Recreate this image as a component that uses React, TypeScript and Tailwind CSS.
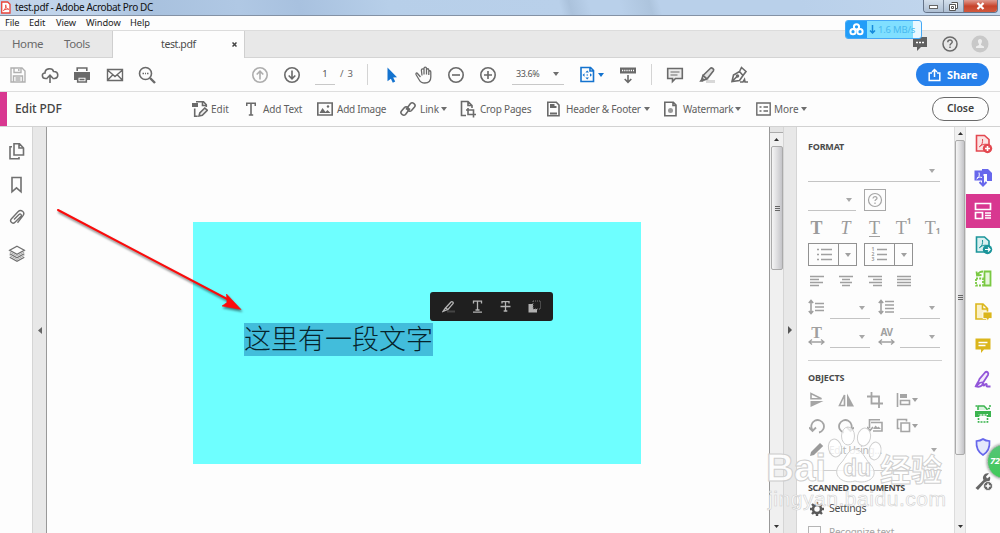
import type { ReactNode } from 'react'

type IconProps = { w?: number; h?: number; children: ReactNode; className?: string; sw?: number }

function Icon({ w = 18, h = 18, children, className = 'text-[#6a6a6a]', sw = 1.6 }: IconProps) {
  return (
    <svg width={w} height={h} viewBox={`0 0 ${w} ${h}`} fill="none" stroke="currentColor" strokeWidth={sw} className={`shrink-0 ${className}`}>
      {children}
    </svg>
  )
}

function Caret({ className = 'text-[#6e6e6e]' }: { className?: string }) {
  return (
    <svg width="6" height="4" viewBox="0 0 6 4" fill="currentColor" className={`shrink-0 ${className}`}>
      <path d="M0 0h6L3 4z" />
    </svg>
  )
}

function Cell({ children }: { children: ReactNode }) {
  return <div className="flex w-8 shrink-0 items-center justify-center">{children}</div>
}

function TitleBar() {
  return (
    <div className="flex h-4 items-start overflow-hidden border-b border-[#8492a5] bg-[linear-gradient(75deg,#c3d5ea_0%,#bfd3eb_9%,#a8c1de_15%,#b0c8e4_24%,#a8c1df_30%,#b7cfe9_39%,#b9d0ea_56%,#abc2dc_57%,#b9d0ea_59%,#b9d0ea_62%,#adc4dd_65%,#b9d0ea_66%,#b9d0ea_80%,#c4d8ee_100%)]">
      <Icon w={11} h={13} className="mt-[1px] text-[#e8443a]" sw={1.3}>
        <path d="M1.7 1h6l2.300 2.300V12H1.700z" fill="#fff" />
        <path d="M3.300 9.500c2-1 3-4 2.500-5.700-.7.5.4 4.500 3 4.500-1.500-.6-4 .2-5.500 1.200" strokeWidth=".9" />
      </Icon>
      <span className="ml-[4px] whitespace-nowrap text-[10px] leading-[15px] tracking-[-0.35px] text-[#111]">test.pdf - Adobe Acrobat Pro DC</span>
      <div className="ml-auto mr-[2px] flex h-[13px] overflow-hidden rounded-b border border-t-0 border-[#65748a]">
        <div className="flex w-5 items-center justify-center border-r border-[#7c899b] bg-linear-to-b from-[#d3dfec] to-[#aebfd3]">
          <div className="mt-[2px] h-1 w-[9px] border border-[#666] bg-white" />
        </div>
        <div className="flex w-5 items-center justify-center border-r border-[#7c899b] bg-linear-to-b from-[#d3dfec] to-[#aebfd3]">
          <Icon w={9} h={9} sw={1} className="text-[#555]">
            <path d="M2.500.500h6v6h-2M.500 2.500h6v6h-6z" fill="#fff" />
            <path d="M2.500 4.500h2v2h-2z" />
          </Icon>
        </div>
        <div className="flex w-[33px] items-center justify-center bg-linear-to-b from-[#df9a90] via-[#c7432b] to-[#d1593e]">
          <Icon w={9} h={8} sw={2.200} className="text-white">
            <path d="m1.500 1 6 6m0-6-6 6" />
          </Icon>
        </div>
      </div>
    </div>
  )
}

function MenuBar() {
  return (
    <div className="flex h-[15px] items-center border-b border-[#dcdcdc] bg-[#fdfdfd] pb-[1px] text-[9.300px] leading-none tracking-[-0.1px] text-[#1c1c1c]">
      <span className="ml-[5px] w-6">File</span>
      <span className="w-[27px]">Edit</span>
      <span className="w-[30px]">View</span>
      <span className="w-11">Window</span>
      <span>Help</span>
    </div>
  )
}

function Tabs() {
  return (
    <div className="flex h-[27px] items-stretch bg-[#e8e8e8] text-[11.500px] text-[#6a6a6a]">
      <div className="flex w-[112px] items-center border-b border-[#d4d4d4] pl-3 tracking-[-0.4px]">
        <span className="w-[52px]">Home</span>
        <span>Tools</span>
      </div>
      <div className="flex w-[133px] items-center border-x border-[#cfcfcf] bg-[#fdfdfd] pl-[48px] text-[10.500px] text-[#4b4b4b]">
        <span className="w-[71px] tracking-[-0.4px]">test.pdf</span>
        <Icon w={5} h={5} sw={1.500} className="text-[#444]">
          <path d="m.5.5 4 4m0-4-4 4" />
        </Icon>
      </div>
      <div className="flex flex-1 items-center justify-end border-b border-[#d4d4d4] pr-[11px]">
        <Icon w={16} h={16} className="text-[#5f5f5f]">
          <path d="M1 1h14v10H9l-4 4v-4H1z" fill="currentColor" stroke="none" />
          <path d="M4 6.500h2m1 0h2m1 0h2" stroke="#fff" />
        </Icon>
        <Icon w={16} h={16} className="ml-[14px] text-[#6a6a6a]" sw={1.500}>
          <circle cx="8" cy="8" r="7" />
          <path d="M5.800 6.200c0-3 4.500-2.800 4.400-.2 0 1.500-2.200 1.600-2.200 3.400M8 10.600v1.500" />
        </Icon>
        <Icon w={18} h={18} className="ml-[13px] text-[#c8c8c8]">
          <circle cx="9" cy="9" r="8.500" fill="currentColor" stroke="none" />
          <path d="M9 4c-3 0-2 4-1 5v1l-3 1.500V13h8v-1.500L10 10V9c1-1 2-5-1-5z" fill="#ededed" stroke="none" />
        </Icon>
      </div>
    </div>
  )
}

function ArrowCircle({ down = false }: { down?: boolean }) {
  return (
    <Icon className={down ? 'text-[#6a6a6a]' : 'text-[#adadad]'}>
      <circle cx="9" cy="9" r="7.200" />
      <path d={down ? 'M9 4.500v8.300M5.700 9.500 9 12.800l3.300-3.300' : 'M9 13.500V5.200M5.700 8.500 9 5.200l3.300 3.300'} />
    </Icon>
  )
}

function Toolbar() {
  return (
    <div className="flex h-[34px] items-center border-b border-[#dedede] bg-[#fdfdfd] pl-[2px] text-[9.500px] text-[#555]">
      <Cell>
        <Icon className="text-[#b0b0b0]" sw={1.400}>
          <path d="M2 2h11l3 3v11H2zM5 2v4.500h7V2M4.500 16v-6h9v6M6.500 12h5m-5 2h5M9.800 3v2" />
        </Icon>
      </Cell>
      <Cell>
        <Icon>
          <path d="M6.500 12.500H4.500C.5 12.500.4 7 4 7c0-5 7.500-5.500 8.500-1.500 5.500-.2 5.500 7 1 7h-2M9 17V9.500M6.300 12 9 9.200 11.700 12" />
        </Icon>
      </Cell>
      <Cell>
        <Icon>
          <path d="M1 6h16v8h-3v-3H4v3H1z" fill="currentColor" stroke="none" />
          <path d="M4.200 5V2h9.600v3M4.700 11h8.600v5H4.700z" />
          <path d="M6.500 13.500h5" />
        </Icon>
      </Cell>
      <div className="ml-px flex">
        <Cell>
          <Icon sw={1.400}>
            <path d="M1.500 3.500h15v11h-15zM1.500 4 9 10.500 16.500 4M1.800 14l5-5.200m9.400 5.200-5-5.200" />
          </Icon>
        </Cell>
        <Cell>
          <Icon>
            <circle cx="7.500" cy="7.500" r="6" />
            <path d="m12 12 5 5" strokeWidth="2.400" />
            <path d="M4.500 7.500H6m1 0h1m1 0h1.500" />
          </Icon>
        </Cell>
      </div>
      <div className="ml-[81px] flex">
        <Cell><ArrowCircle /></Cell>
        <Cell><ArrowCircle down /></Cell>
      </div>
      <div className="ml-[7px] h-[21px] w-5 border-b border-[#c8c8c8] text-center leading-[20px]">1</div>
      <div className="ml-[5px] w-3 whitespace-nowrap tracking-[-0.3px] text-[#666]">/&nbsp;&nbsp;3</div>
      <div className="ml-[15px] h-[21px] w-px bg-[#d4d4d4]" />
      <div className="ml-2 flex">
        <Cell>
          <Icon w={12} h={16} className="text-[#1473cf]">
            <path d="M1.500.500 11 10.200 7.200 10.600l2 4-2.400 1.200-1.900-4.100-3.400 2.600z" fill="currentColor" stroke="none" />
          </Icon>
        </Cell>
        <Cell>
          <Icon sw={1.300}>
            <path d="M5.500 11 2.500 7.500C1.500 6 .5 7.500 1.300 9l3 5c1 2 2.500 3 5.500 3 4 0 6-2 6-6V6c0-1.700-2-1.700-2 0V4c0-1.700-2.300-1.700-2.300 0V2.500C11.500.7 9 .7 9 2.500V4c0-1.800-2.700-1.500-2.600.2L7 9.500M9 4v4.500M11.500 4v4.500M13.800 5v4" />
          </Icon>
        </Cell>
        <Cell>
          <Icon>
            <circle cx="9" cy="9" r="7.200" />
            <path d="M5 9h8" />
          </Icon>
        </Cell>
        <Cell>
          <Icon>
            <circle cx="9" cy="9" r="7.200" />
            <path d="M5 9h8M9 5v8" />
          </Icon>
        </Cell>
      </div>
      <div className="ml-2 flex h-[21px] w-[52px] items-center justify-between border-b border-[#c8c8c8] pl-[4px] pr-[5px]">
        <span className="text-[9px] tracking-[-0.4px]">33.6%</span>
        <Caret />
      </div>
      <div className="ml-[15px] flex w-[25px] items-center justify-between">
        <Icon w={17} h={17} className="text-[#1473cf]">
          <path d="M2 1.500h9.500l3 3v11H2zM11 1.500V5h3.500" />
          <path d="M8.200 4.500 10 6.500H6.400zM8.200 13.500 10 11.500H6.400zM3.500 9l2-1.800v3.600zM13 9l-2-1.800v3.600z" fill="currentColor" stroke="none" />
          <path d="M7.700 9h1" />
        </Icon>
        <Caret className="text-[#1473cf]" />
      </div>
      <div className="ml-2 flex">
        <Cell>
          <Icon>
            <path d="M1 1.500h16v6H1z" fill="currentColor" stroke="none" />
            <path d="M3 4.500h12" stroke="#fff" strokeDasharray="1.200 1" />
            <path d="M9 9v7M5.700 13 9 16.300l3.300-3.300" />
          </Icon>
        </Cell>
      </div>
      <div className="ml-[7px] h-[21px] w-px bg-[#d4d4d4]" />
      <div className="ml-[7px] flex">
        <Cell>
          <Icon>
            <path d="M1.700 2.500h14.600v10H9.500l-3 3v-3H1.700z" fill="#ececec" />
            <path d="M4.500 6h9m-9 3h7" strokeWidth="1.200" />
          </Icon>
        </Cell>
        <Cell>
          <Icon>
            <path d="M8 15.500h9" stroke="#d8d8d8" strokeWidth="3" />
            <path d="m5 9.500 7.500-7.300c1-1 4 1 3 2.500L9 13zM5 9.500 4 12.500l2 1.500 3-1z" fill="#e2e2e2" />
            <path d="M3.500 12.500 6 14.500l-1 1.300H1.200z" fill="currentColor" stroke="none" />
          </Icon>
        </Cell>
        <Cell>
          <Icon>
            <path d="M2 15.500 3.500 9l6-3.500 3.500 4-3.500 5zM9.500 5.500l2-4 4.500 4-3 4M2 15.500l5-5" />
            <circle cx="7.500" cy="10" r="1" fill="currentColor" />
            <path d="M10 16h3l1.500-2.500.5 2.500h3" />
          </Icon>
        </Cell>
      </div>
      <div className="ml-auto mr-[11px] flex h-[23px] w-[73px] items-center rounded-full bg-[#2680eb] pl-3 text-white">
        <Icon w={13} h={14} className="text-white" sw={1.500}>
          <path d="M4 5H1.200v7.500h10.600V5H9M6.500 9V1.500M4 4l2.500-2.500L9 4" />
        </Icon>
        <span className="ml-[6px] text-[11px] font-bold leading-none tracking-[-0.1px]">Share</span>
      </div>
    </div>
  )
}

function EditBar() {
  return (
    <div className="flex h-[35px] items-center border-b border-[#d2d2d2] bg-[#fdfdfd] text-[10px] text-[#606060]">
      <div className="h-full w-[7px] bg-[#d83790]" />
      <div className="w-[184px] pl-2 text-[12px] font-medium tracking-[-0.1px] text-[#444]">Edit PDF</div>
      <div className="flex w-[55px] items-center gap-[3px]">
        <Icon w={17}>
          <path d="M1 3h6v4H1z" fill="currentColor" stroke="none" />
          <path d="M5 1.700h7.500l2.800 3V7M11.500 1.700V5.500h4M3.700 8.500v7.800h3" />
          <path d="m8 16 .8-3 5-5 2.500 2.300-5 5z" fill="#eee" />
        </Icon>
        <span>Edit</span>
      </div>
      <div className="flex w-[71px] items-center gap-[7px]">
        <Icon w={10} h={14}>
          <path d="M.7 4V1.200h8.600V4M5 1v12M2.800 13h4.400" />
        </Icon>
        <span className="whitespace-nowrap tracking-[-0.15px]">Add Text</span>
      </div>
      <div className="flex w-[83px] items-center gap-[4px]">
        <Icon w={16} h={14}>
          <path d="M.8 1h14.400v12H.8z" />
          <path d="m2.500 11 3-5 3 4 2-2 3 3z" fill="currentColor" stroke="none" />
          <circle cx="11" cy="4.500" r="1.200" fill="currentColor" stroke="none" />
        </Icon>
        <span className="whitespace-nowrap tracking-[-0.25px]">Add Image</span>
      </div>
      <div className="flex w-[60px] items-center">
        <Icon w={16} h={16}>
          <path d="m6 8.500 4.500-6c2-2 6 1 4 3.500l-3 3.500c-1.500 1.500-4 .5-4-1.500M10 7.500l-4.500 6c-2 2-6-1-4-3.500l3-3.500c1.500-1.500 4-.5 4 1.500" />
        </Icon>
        <span className="ml-[4px] w-[21px] tracking-[-0.1px]">Link</span>
        <Caret />
      </div>
      <div className="flex w-[87px] items-center gap-[4px]">
        <Icon w={16}>
          <path d="M6 15.500H1.500v-14H8l4 4V8M8 1.500v4h4M8 8v6.500h8M6 10h7.500v7.500" />
        </Icon>
        <span className="whitespace-nowrap tracking-[-0.2px]">Crop Pages</span>
      </div>
      <div className="flex w-[117px] items-center">
        <Icon w={13} h={16}>
          <path d="M.8 1.200h8.500L12 4v10.800H.8z" />
          <path d="M3 4h4.500M3 6h6.500M3 12.500h7" strokeWidth="1.800" />
        </Icon>
        <span className="ml-[6px] w-[78px] whitespace-nowrap tracking-[-0.2px]">Header &amp; Footer</span>
        <Caret />
      </div>
      <div className="flex w-[92px] items-center">
        <Icon w={13} h={16}>
          <path d="M.8 1.200h8.500L12 4v10.800H.8zM9 1.200V4.500h3" />
          <circle cx="6.500" cy="9.500" r="2.500" fill="#999" stroke="none" />
        </Icon>
        <span className="ml-[6px] w-[52px] whitespace-nowrap tracking-[-0.25px]">Watermark</span>
        <Caret />
      </div>
      <div className="flex items-center">
        <Icon w={15} h={14} sw={1.400}>
          <path d="M.8 1h13.400v12H.8zM7.500 5h4.500m-4.500 4h4.500M3.500 5h2m-2 4h2" />
        </Icon>
        <span className="ml-[3px] w-[27px]">More</span>
        <Caret />
      </div>
      <div className="ml-auto mr-[11px] flex h-6 w-[57px] items-center justify-center rounded-full border border-[#6a6a6a] text-[10.500px] font-semibold tracking-[-0.1px] text-[#3f3f3f]">Close</div>
    </div>
  )
}

function LeftRail() {
  return (
    <div className="flex w-8 shrink-0 flex-col items-center pl-px pt-[15px]">
      <Icon className="text-[#707070]">
        <path d="M6 1.700h5.500L15.500 6v7H6zM11 1.700V6h4.500M4 4.700H2v12h9V15" />
      </Icon>
      <Icon className="mt-[16px] text-[#707070]">
        <path d="M4 1.500h9v14.300l-4.500-4-4.500 4z" />
      </Icon>
      <Icon className="mt-[15px] text-[#707070]" sw={1.400}>
        <path d="m6 10.500 5-5c1.500-1.400 3 .5 2 1.700l-6 6c-2.500 2.400-6-.8-3.500-3.500l6.500-7c3-3 7.500.6 5 4l-5.500 7" />
      </Icon>
      <Icon className="mt-[18px] text-[#707070]" sw={1.300}>
        <path d="m9 1.200 7.300 4L9 9.200 1.700 5.200zM1.700 8.700 9 12.700l7.300-4M1.700 12.300 9 16.300l7.300-4" />
        <path d="M1.700 7 9 11l7.300-4M1.700 10.500 9 14.500l7.300-4" strokeWidth=".6" />
      </Icon>
    </div>
  )
}

function Document() {
  return (
    <div className="relative min-w-0 flex-1 overflow-hidden bg-[#fdfdfd] pl-[146px] pt-[95px]">
      <div className="h-[242px] w-[448px] bg-[#6effff] pl-[51px] pt-[101px]">
        <span className="block h-[33px] w-[189px] whitespace-nowrap bg-[#42bddb] font-['Noto_Sans_CJK_SC','Noto_Sans',sans-serif] text-[27px] font-light leading-[29px] text-[#06242c]">这里有一段文字</span>
      </div>
      <svg width="210" height="120" viewBox="0 0 210 120" className="absolute left-[2px] top-[75px] drop-shadow-[1px_2px_1px_rgba(0,0,0,0.5)]">
        <path d="M9 8 180 98" stroke="#fb0b0b" strokeWidth="2" strokeLinecap="round" />
        <path d="m192 107.500-19-3.500 5-3.500-.5-8.500z" fill="#fb0b0b" stroke="#fb0b0b" strokeWidth=".6" />
      </svg>
      <div className="absolute left-[383px] top-[165px] flex h-[29px] w-[123px] items-center justify-around rounded-[3px] bg-[#1f1f1f] px-[3px]">
        <Icon w={13} h={13} className="text-[#b5b5b5]" sw={1.300}>
          <path d="M5 11.500h8" stroke="#444" strokeWidth="2" />
          <path d="m3.500 8 5.500-6c1-1 3 .500 2 1.700L6 9.500zM3.500 8 1 11.500l5-2" />
        </Icon>
        <Icon w={11} h={13} className="text-[#b5b5b5]" sw={1.300}>
          <path d="M1.500 3.500V1.200h8v2.300M5.500 1v9M3.500 10h4M1 12.200h9" />
        </Icon>
        <Icon w={11} h={13} className="text-[#b5b5b5]" sw={1.300}>
          <path d="M2 3.500V1.700h7v1.800M5.500 2v9M3.700 11h3.600M.5 6.500h10" />
        </Icon>
        <Icon w={13} h={13} className="text-[#b0b0b0]">
          <path d="M.5 4H5v5h4v3.500H.5z" fill="currentColor" stroke="none" />
          <path d="M5 1h7.500v8H5z" stroke="#808080" strokeWidth=".9" strokeDasharray="1 1" />
        </Icon>
      </div>
    </div>
  )
}

function Grip() {
  return (
    <div className="flex flex-col gap-px">
      <div className="h-px w-[5px] bg-[#666]" />
      <div className="h-px w-[5px] bg-[#666]" />
      <div className="h-px w-[5px] bg-[#666]" />
    </div>
  )
}

function ScrollArrow({ down = false }: { down?: boolean }) {
  return (
    <div className="flex h-[13px] shrink-0 items-center justify-center">
      <svg width="5" height="3" viewBox="0 0 5 3" fill="#333">
        <path d={down ? 'M0 0h5L2.500 3z' : 'M0 3h5L2.500 0z'} />
      </svg>
    </div>
  )
}

function Line({ className }: { className: string }) {
  return (
    <div className={`flex items-center justify-end border-b border-[#c4c4c4] ${className}`}>
      <Caret className="text-[#a8a8a8]" />
    </div>
  )
}

const letterCell = "flex w-[29px] justify-center font-['Liberation_Serif',serif] text-[18px] leading-none text-[#9a9a9a]"

function AlignIcon({ d }: { d: string }) {
  return (
    <div className="flex w-[29px] justify-center">
      <Icon w={14} h={12} sw={1.300} className="text-[#a0a0a0]">
        <path d={d} />
      </Icon>
    </div>
  )
}

function ObjectIcon({ children, sw }: { children: ReactNode; sw?: number }) {
  return (
    <div className="flex w-[29px] justify-center">
      <Icon w={16} h={16} className="text-[#a5a5a5]" sw={sw}>{children}</Icon>
    </div>
  )
}

function FormatPanel() {
  return (
    <div className="flex w-[157px] shrink-0 flex-col overflow-hidden bg-[#fdfdfd] pl-[11px] text-[#a0a0a0] [&>*]:shrink-0">
      <h2 className="mt-[13px] h-[14px] text-[9px] font-bold leading-[14px] tracking-[-0.2px] text-[#4b4b4b]">FORMAT</h2>
      <Line className="h-[28px] w-[132px] pr-[5px] pt-[6px]" />
      <div className="mt-[7px] flex h-[22px] gap-2">
        <Line className="w-12 pr-[4px]" />
        <div className="flex w-[22px] items-center justify-center border border-[#a8a8a8]">
          <Icon w={16} h={16} className="text-[#a5a5a5]" sw={1.200}>
            <circle cx="8" cy="8" r="6.500" />
            <path d="M6 6.500c0-2.500 4-2.500 4-.3C10 7.500 8 7.500 8 9M8 10.500V12" />
          </Icon>
        </div>
      </div>
      <div className="-ml-[6px] mt-[7px] flex h-5 items-center">
        <span className={`${letterCell} font-bold`}>T</span>
        <span className={`${letterCell} italic`}>T</span>
        <span className={letterCell}><span className="h-[18px] border-b border-[#a0a0a0]">T</span></span>
        <span className={letterCell}>T<span className="-mt-[2px] font-sans text-[8px] font-bold">1</span></span>
        <span className={letterCell}>T<span className="mt-[8px] font-sans text-[8px] font-bold">1</span></span>
      </div>
      <div className="mt-[5px] flex h-[23px] gap-[7px]">
        <div className="flex w-[49px] border border-[#929292]">
          <div className="flex w-[30px] items-center justify-center border-r border-[#929292]">
            <Icon w={16} h={15} sw={1.300} className="text-[#a0a0a0]">
              <path d="M5 2.500h11M5 7.500h11M5 12.500h11M1 2.500h2M1 7.500h2M1 12.500h2" />
            </Icon>
          </div>
          <div className="flex flex-1 items-center justify-center"><Caret className="text-[#a0a0a0]" /></div>
        </div>
        <div className="flex w-[49px] border border-[#929292]">
          <div className="flex w-[30px] items-center justify-center gap-[2px] border-r border-[#929292]">
            <div className="text-[5px] font-bold leading-[5px]"><div>1</div><div>2</div><div>3</div></div>
            <Icon w={11} h={15} sw={1.300} className="text-[#a0a0a0]">
              <path d="M1 2.500h10M1 7.500h10M1 12.500h10" />
            </Icon>
          </div>
          <div className="flex flex-1 items-center justify-center"><Caret className="text-[#a0a0a0]" /></div>
        </div>
      </div>
      <div className="-ml-[6px] mt-[9px] flex h-3">
        <AlignIcon d="M0 1.500h14M0 4.500h9M0 7.500h13M0 10.500h9" />
        <AlignIcon d="M0 1.500h14M3 4.500h8M1 7.500h12M3 10.500h8" />
        <AlignIcon d="M0 1.500h14M5 4.500h9M1 7.500h13M5 10.500h9" />
        <AlignIcon d="M0 1.500h14M0 4.500h14M0 7.500h14M0 10.500h14" />
      </div>
      <div className="mt-[10px] flex h-[22px] items-start">
        <Icon w={17} h={16} className="mt-[2px] text-[#a0a0a0]">
          <path d="M3 2v12M.8 4 3 1.500 5.200 4M.8 12 3 14.500 5.200 12M7 4.500h9M7 8h9M7 11.500h9" />
        </Icon>
        <Line className="ml-[5px] h-[22px] w-10 pr-[5px]" />
        <Icon w={17} h={16} className="ml-[8px] mt-[2px] text-[#a0a0a0]">
          <path d="M3 2v12M.8 4 3 1.500 5.200 4M.8 12 3 14.500 5.200 12M7 2.500h9M7 6h9M7 9.500h9M7 13h9" />
        </Icon>
        <Line className="ml-[5px] h-[22px] w-10 pr-[5px]" />
      </div>
      <div className="mt-[7px] flex h-[22px] items-start">
        <div className="-mt-px w-[17px]">
          <div className="h-[14px] text-center font-['Liberation_Serif',serif] text-[16px] font-bold leading-[15px]">T</div>
          <Icon w={17} h={6} sw={1.300} className="text-[#a0a0a0]"><path d="M1 3h15M4 .5 1 3l3 2.500M13 .5 16 3l-3 2.500" /></Icon>
        </div>
        <Line className="ml-[5px] h-[22px] w-10 pr-[5px]" />
        <div className="-mt-px ml-[8px] w-[17px]">
          <div className="h-[14px] text-center text-[10px] font-bold leading-[14px] tracking-[-0.5px]">AV</div>
          <Icon w={17} h={6} sw={1.300} className="text-[#a0a0a0]"><path d="M1 3h15M4 .5 1 3l3 2.500M13 .5 16 3l-3 2.500" /></Icon>
        </div>
        <Line className="ml-[5px] h-[22px] w-10 pr-[5px]" />
      </div>
      <div className="mt-[12px] h-px w-[134px] bg-[#cfcfcf]" />
      <h2 className="mt-[10px] h-[14px] text-[9px] font-bold leading-[14px] tracking-[-0.1px] text-[#4b4b4b]">OBJECTS</h2>
      <div className="-ml-[6px] mt-[6px] flex h-[18px] items-center">
        <ObjectIcon>
          <path d="M2 1.500v5.200h10.500z" />
          <path d="M1.500 9h13L1.500 15z" fill="currentColor" stroke="none" />
        </ObjectIcon>
        <ObjectIcon>
          <path d="M6.500 3v10.500H1.500z" />
          <path d="M9 1.500v13h7z" fill="currentColor" stroke="none" />
        </ObjectIcon>
        <ObjectIcon sw={1.800}>
          <path d="M4.500 0v11.500H16M0 4.500h12V16" />
        </ObjectIcon>
        <ObjectIcon>
          <path d="M1.500 1v14M4.500 8.500h9v4h-9z" />
          <path d="M4 2h7v4H4z" fill="currentColor" stroke="none" />
        </ObjectIcon>
        <Caret className="-ml-[6px] text-[#a0a0a0]" />
      </div>
      <div className="-ml-[6px] mt-[8px] flex h-[17px] items-center">
        <ObjectIcon sw={1.800}>
          <path d="M3.500 12A6.300 6.300 0 1 1 10 14.500M0 9.500 3.500 13 7 9.500" />
        </ObjectIcon>
        <ObjectIcon sw={1.800}>
          <path d="M12.500 12A6.300 6.300 0 1 0 6 14.500M16 9.500 12.500 13 9 9.500" />
        </ObjectIcon>
        <ObjectIcon>
          <path d="M4 4.500h11V13H6M2.500 10V1.700H13M0 9l3 3.500L6 9" />
          <path d="m6 11 2.500-3.500 2 2 1-1 2.500 2.500z" fill="currentColor" stroke="none" />
        </ObjectIcon>
        <ObjectIcon>
          <path d="M5 5h8.500v8.500H5zM3.500 10.500H1.500v-9h9v2" />
        </ObjectIcon>
        <Caret className="-ml-[6px] text-[#a0a0a0]" />
      </div>
      <div className="mt-[7px] flex h-[18px] items-center text-[10px]">
        <Icon w={17} h={16} className="text-[#9a9a9a]"><path d="m2 14 1-4L12 1l3.200 3L6 13z" fill="currentColor" stroke="none" /></Icon>
        <span className="ml-1 w-[102px] tracking-[-0.2px] text-[#b5b5b5]">Edit Using...</span>
        <Caret className="text-[#a8a8a8]" />
      </div>
      <div className="mt-[11px] h-px w-[134px] bg-[#d0d0d0]" />
      <h2 className="mt-[10px] h-[14px] whitespace-nowrap text-[9px] font-bold leading-[14px] tracking-[-0.35px] text-[#4b4b4b]">SCANNED DOCUMENTS</h2>
      <div className="mt-[6px] flex h-4 items-center text-[10.500px] text-[#4b4b4b]">
        <Icon w={17} h={16} className="text-[#5a5a5a]">
          <circle cx="9" cy="8" r="4" strokeWidth="2.500" />
          <path d="M9 1v2.500m0 9V15M2 8h2.500m9 0H16M4 3l1.800 1.800m6.400 6.400L14 13m0-10-1.800 1.800M5.800 11.200 4 13" strokeWidth="2.400" />
        </Icon>
        <span className="ml-1 tracking-[-0.35px]">Settings</span>
      </div>
      <div className="mt-[7px] flex h-4 items-center text-[10px] text-[#a5a5a5]">
        <div className="h-[13px] w-[13px] border border-[#b5b5b5]" />
        <span className="ml-2 whitespace-nowrap tracking-[-0.25px]">Recognize text</span>
      </div>
    </div>
  )
}

function ToolRail() {
  return (
    <div className="flex w-[34px] shrink-0 flex-col items-center bg-[#fdfdfd]">
      <Icon w={34} h={34} className="text-[#e34850]">
        <path d="M10.500 8.500h8l4.500 4V24H10.500z" fill="#fbe3e3" />
        <path d="M13 20c3-1 4-5 3.500-8M14 19c3-2 5-2 7-1.500" strokeWidth="1" />
        <circle cx="21.500" cy="21.500" r="4.700" fill="currentColor" stroke="none" />
        <path d="M21.500 19v5M19 21.500h5" stroke="#fff" />
      </Icon>
      <Icon w={34} h={33} className="text-[#6767ec]">
        <path d="M16 8h6l4 4v8h-5v-7h-5zM8.500 9.500h9v10h-9z" fill="currentColor" stroke="none" />
        <path d="M10.500 18c2-1 3.500-3 2.500-6.500M11 17c2-1 3-1 5-.5" stroke="#fff" strokeWidth="1" />
        <path d="M17 15v9M13.500 21l3.500 3.500 3.500-3.500" strokeWidth="2" />
      </Icon>
      <div className="flex h-[34px] w-full items-center justify-center bg-[#d83790]">
        <Icon w={18} h={18} className="text-white" sw={1.700}>
          <path d="M1.500 1.500h15v6h-15zM1.500 10.500h7v6h-7zM11 11h6m-6 2.500h6m-6 2.500h6" />
        </Icon>
      </div>
      <Icon w={34} h={34} className="text-[#1b959a]">
        <path d="M10.500 9h8l4.500 4v11H10.500z" fill="#d9f0f0" />
        <path d="M13 20c3-1 4-5 3.500-8M14 19c3-2 5-2 7-1.500" strokeWidth="1" />
        <circle cx="21.500" cy="21.500" r="4.700" fill="currentColor" stroke="none" />
        <path d="M19 21.500h5m-2-2 2 2-2 2" stroke="#fff" strokeWidth="1.200" />
      </Icon>
      <Icon w={34} h={33} className="text-[#7ac943]" sw={1.800}>
        <path d="M18.500 9.500h6v14h-6z" fill="#e7f7dd" />
        <path d="M10 16.500h7v7h-7z" strokeDasharray="2 1.200" />
        <path d="M17 9.500c-3 0-4 .5-5.500 3.500m-1-3.500.5 4 4.500-.5" />
      </Icon>
      <Icon w={34} h={34} className="text-[#dbb61c]">
        <path d="M10 9h7l4.500 4.500V24H10zM16.500 9v5h5" fill="#faf0c5" />
        <path d="M17 17h9v6.500h-3l-2.500 2.500v-2.500H17z" fill="currentColor" stroke="#fff" strokeWidth=".8" />
      </Icon>
      <Icon w={34} h={34} className="text-[#dbb61c]">
        <path d="M9.500 9.500h15v11H18L15 24v-3.500H9.500z" fill="currentColor" stroke="none" />
        <path d="M12.500 13.500h9m-9 3h7" stroke="#fff" />
      </Icon>
      <Icon w={34} h={34} className="text-[#9256d9]">
        <path d="M9.500 24c1-3 3-5 4-8l5.500-6.500c2-2 4 .5 3 2.500l-4.500 7-4 1L10 23.500c3 1 6 0 7-3 1-.5 0 2.500 1 2s1.500-2 2.500-1.500-1 2.500 1 2.500h3" strokeWidth="1.800" fill="#f3eafb" />
      </Icon>
      <Icon w={34} h={33} className="text-[#3bb44f]">
        <path d="M9 14h16v6h-3v-3H12v3H9z" fill="currentColor" stroke="none" />
        <path d="M12 13V9h6l3 3v1M9.500 9h1.500m12 0h2M22 11.500h2" fill="#d8f2dd" />
        <path d="M12.500 18h9v7h-9z" strokeDasharray="2 1" />
      </Icon>
      <Icon w={34} h={34} className="text-[#6767ec]">
        <path d="M17 9c2 1.500 4 2 6.500 2 .5 6-1.500 11-6.500 14-5-3-7-8-6.500-14 2.500 0 4.500-.5 6.500-2z" fill="#e4e8fb" strokeWidth="1.700" />
      </Icon>
      <Icon w={34} h={34} className="text-[#666]">
        <path d="m9.500 24 8-8c-2-4 2-8 5.500-6.500L20 12.500l1 2 3-2c1 4-1 6-5 5.500l-7 8z" fill="currentColor" stroke="none" />
        <circle cx="22" cy="22" r="4.500" fill="#666" stroke="#fff" strokeWidth=".8" />
        <path d="M22 19.500v5M19.500 22h5" stroke="#fff" />
      </Icon>
    </div>
  )
}

function SiteMark() {
  return (
    <div className="pointer-events-none absolute left-[766px] top-[426px] h-[90px] w-[186px]">
      <svg width="186" height="90" viewBox="0 0 186 90" className="absolute left-0 top-0" fill="#fff" fillOpacity=".75" stroke="#cfcfcf" strokeWidth="1">
        <ellipse cx="69" cy="22" rx="6.500" ry="9" transform="rotate(-12 69 22)" />
        <ellipse cx="82" cy="10" rx="6.500" ry="9" />
        <ellipse cx="98" cy="11" rx="6.500" ry="9" transform="rotate(12 98 11)" />
        <ellipse cx="109" cy="25" rx="6" ry="9" transform="rotate(10 109 25)" />
        <path d="M89 23c-7 0-9 9-14 14-11 11 1 22 14 18 13 4 26-5 15-17-5-5-8-15-15-15z" />
      </svg>
      <div className="absolute left-0 top-[26px] flex h-8 items-center font-['Liberation_Sans',sans-serif] text-[39px] font-bold leading-8 text-white/85 [-webkit-text-stroke:1px_#cfcfcf]">
        <span className="w-[77px] tracking-[-0.3px]">Bai</span>
        <span className="w-[37px] text-[23px]">du</span>
        <span className="whitespace-nowrap font-['Noto_Sans_CJK_SC',sans-serif] text-[31px]">经验</span>
      </div>
      <div className="absolute left-[2px] top-[62px] whitespace-nowrap font-['Liberation_Sans',sans-serif] text-[21px] leading-[22px] tracking-[0.55px] text-white/90 [-webkit-text-stroke:0.6px_#cfcfcf]">jingyan.baidu.com</div>
    </div>
  )
}

export default function App() {
  return (
    <div className="relative flex h-[533px] w-[1000px] flex-col overflow-hidden bg-[#fdfdfd] font-['Noto_Sans','Open_Sans',sans-serif]">
      <TitleBar />
      <MenuBar />
      <Tabs />
      <Toolbar />
      <EditBar />
      <div className="flex min-h-0 flex-1">
        <LeftRail />
        <div className="flex w-[15px] shrink-0 items-center justify-center border-l border-r border-l-[#d5d5d5] border-r-[#999] bg-[#e8e8e8]">
          <svg width="4" height="7" viewBox="0 0 4 7" fill="#666"><path d="M4 0v7L0 3.500z" /></svg>
        </div>
        <Document />
        <div className="flex w-[14px] shrink-0 flex-col border-l border-[#999] bg-[#f0f0f0]">
          <div className="h-[6px] border-b border-[#aaa] bg-[#e4e4e4]" />
          <ScrollArrow />
          <div className="ml-[1px] flex h-[124px] items-center justify-center rounded-[2px] border border-[#aaa] bg-linear-to-r from-[#f5f5f5] via-[#dedee0] to-[#c4c4c8]"><Grip /></div>
          <div className="flex-1" />
          <ScrollArrow down />
        </div>
        <div className="flex w-[14px] shrink-0 items-center justify-center border-x border-[#d5d5d5] bg-[#e8e8e8]">
          <svg width="4" height="8" viewBox="0 0 4 8" fill="#555"><path d="M0 0v8l4-4z" /></svg>
        </div>
        <FormatPanel />
        <div className="flex w-3 shrink-0 flex-col border-x border-[#dcdcdc] bg-[#f0f0f0]">
          <ScrollArrow />
          <div className="flex h-[315px] items-center justify-center rounded-[2px] border border-[#aaa] bg-linear-to-r from-[#f5f5f5] via-[#dedee0] to-[#c4c4c8]"><Grip /></div>
          <div className="flex-1" />
          <ScrollArrow down />
        </div>
        <ToolRail />
      </div>
      <SiteMark />
      <div className="absolute left-[845px] top-5 flex h-[19px] w-[77px] items-center overflow-hidden rounded-[3px] border border-[#45a8f5] bg-linear-to-r from-[#80dfff] from-90% to-[#e9f8ff] to-90%">
        <div className="flex h-full w-[21px] shrink-0 items-center justify-center bg-[#229df8]">
          <Icon w={15} h={13} sw={2} className="text-white">
            <circle cx="7.500" cy="3.800" r="2.600" />
            <circle cx="4" cy="8.700" r="2.600" />
            <circle cx="11" cy="8.700" r="2.600" />
          </Icon>
        </div>
        <Icon w={7} h={9} sw={1.500} className="ml-[2px] text-[#168bdc]">
          <path d="M3.500 0v8M1 5.500 3.500 8 6 5.500" />
        </Icon>
        <span className="ml-[2px] whitespace-nowrap text-[9.500px] leading-none tracking-[-0.2px] text-[#48b9ef]">1.6 MB/s</span>
      </div>
      <div className="absolute left-[987px] top-[444px] flex h-[35px] w-[35px] items-center rounded-full border border-[#a3b5a8] bg-linear-to-b from-[#55c476] to-[#3fca57] pl-[2px] text-[9.500px] font-bold italic tracking-[-0.500px] text-white shadow-[0_0_3px_#777]">72</div>
    </div>
  )
}
